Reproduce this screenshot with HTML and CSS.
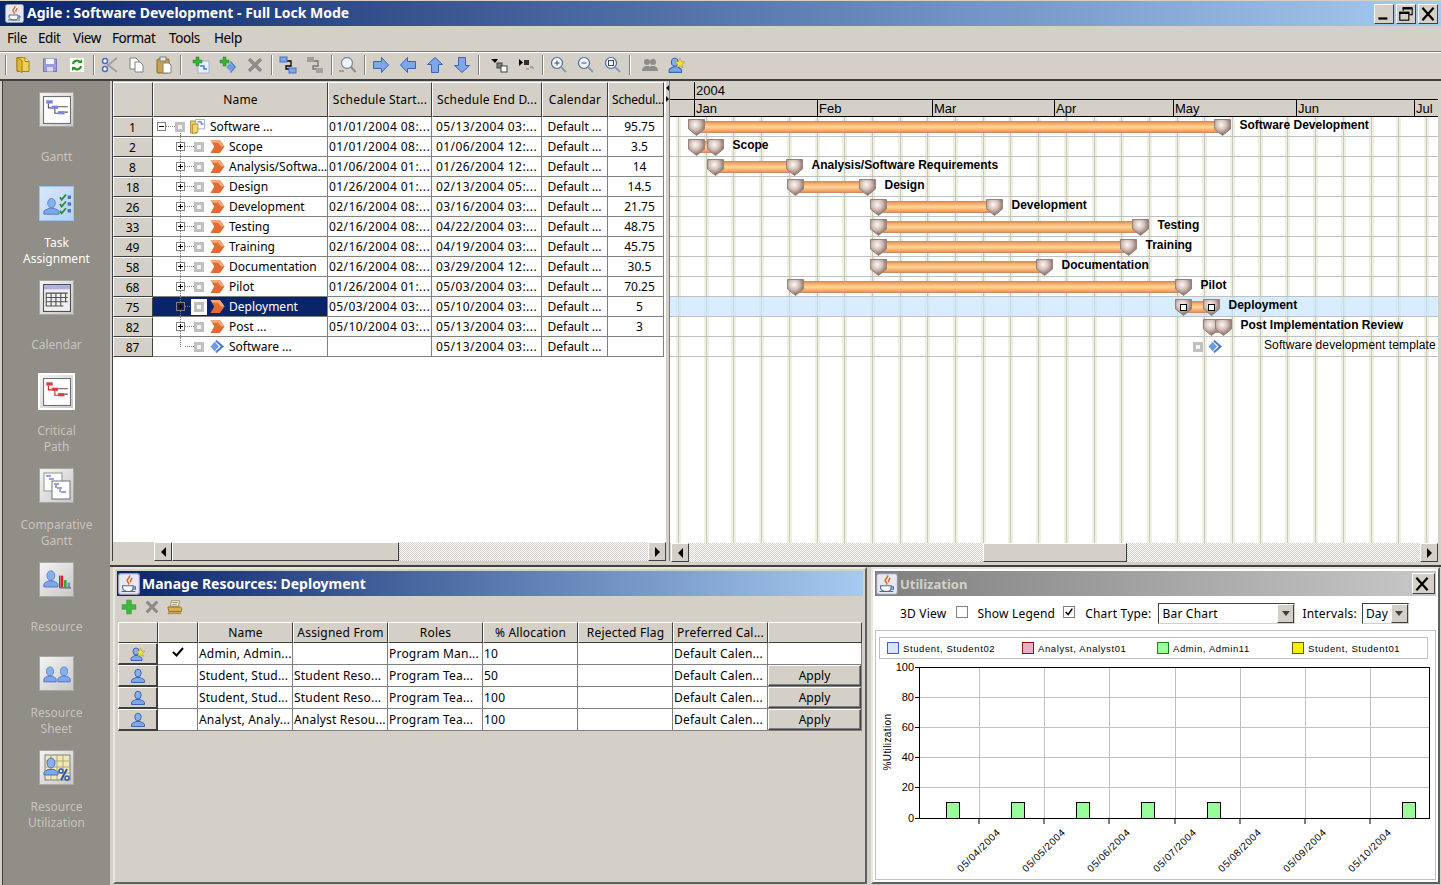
FILE: index.html
```html
<!DOCTYPE html>
<html lang="en">
  <head>
    <meta charset="UTF-8" />
    <title>Agile : Software Development - Full Lock Mode</title>
    <link rel="stylesheet" href="styles.css">
  </head>
  <body>
    <!-- icon sprite -->
    <svg class="sprite" xmlns="http://www.w3.org/2000/svg">
      <defs>
        <radialGradient id="shieldFill" cx="42%" cy="32%" r="62%">
          <stop offset="0" stop-color="#fbf8f6" />
          <stop offset="0.5" stop-color="#d4c2ba" />
          <stop offset="1" stop-color="#8e726a" />
        </radialGradient>
      </defs>
      <symbol id="i-java" viewBox="0 0 19 19">
        <rect x="0.5" y="0.5" width="18" height="18" rx="2" fill="#e8e8f0" stroke="#9098b0" />
        <path d="M10 2c1 2-3 3-2 5s2 1 1 3M12 4c0 2-2 2-1 4" fill="none" stroke="#e06820" stroke-width="1.3" />
        <path d="M4 11h9v2c0 2-2 3-4 3s-5-1-5-3z" fill="#fff" stroke="#4a6a9a" />
        <path d="M13 12h2v2h-2M3 16h12" fill="none" stroke="#4a6a9a" />
      </symbol>
      <symbol id="i-exp-plus" viewBox="0 0 9 9">
        <rect x="0.5" y="0.5" width="8" height="8" fill="#fff" stroke="#808080" />
        <path d="M2 4.5h5M4.5 2v5" stroke="#000" />
      </symbol>
      <symbol id="i-exp-dark" viewBox="0 0 9 9">
        <rect x="0.5" y="0.5" width="8" height="8" fill="#0a246a" stroke="#808080" />
        <path d="M2 4.5h5M4.5 2v5" stroke="#000" />
      </symbol>
      <symbol id="i-exp-minus" viewBox="0 0 9 9">
        <rect x="0.5" y="0.5" width="8" height="8" fill="#fff" stroke="#808080" />
        <path d="M2 4.5h5" stroke="#000" />
      </symbol>
      <symbol id="i-node" viewBox="0 0 10 10">
        <rect width="10" height="10" fill="#c0c0c0" />
        <rect x="3" y="3" width="4" height="4" fill="#f4f4f4" />
      </symbol>
      <symbol id="i-folder" viewBox="0 0 16 16">
        <path d="M0.500 2h6l1 1v12h-7z" fill="#e8c860" stroke="#a08030" stroke-width="0.8" />
        <path d="M6 0.500h9.500v10H6z" fill="#fff" stroke="#7a9ad0" stroke-width="0.8" />
        <path d="M8 3h4v2.500h2.500" fill="none" stroke="#5a80c8" stroke-width="1.200" />
        <path d="M2.500 6l6-1v9l-6 1.500z" fill="#f4d868" stroke="#a08030" stroke-width="0.8" />
      </symbol>
      <symbol id="i-chevron" viewBox="0 0 16 15">
        <path d="M0.500 0.500h10l5 7-5 7h-10l4-7z" fill="#e06c34" />
        <path d="M0.500 0.500h10l5 7h-3.500l-3.500-4H2.500z" fill="#f2a878" />
      </symbol>
      <symbol id="i-diamond" viewBox="0 0 16 15">
        <path d="M0.500 7.500L5 2.500l4.500 5L5 12.500z" fill="#6e9ce4" />
        <path d="M7 0.500l8 7-8 7-1.500-1.500 6-5.500-6-5.500z" fill="#4a7ad0" />
      </symbol>
      <symbol id="i-shield" viewBox="0 0 17 17">
        <path d="M0.500 0.500h16v9.500l-8 6.500-8-6.500z" fill="url(#shieldFill)" stroke="#96827a" />
      </symbol>

      <!-- toolbar -->
      <symbol id="t-open" viewBox="0 0 18 18">
        <path d="M3 1.500h8l4 4v10H3z" fill="#f0d050" stroke="#a08020" />
        <path d="M3 1.500l5 3v12l-5-2z" fill="#e0b830" stroke="#a08020" />
        <path d="M11 1.500v4h4" fill="#fff4b0" stroke="#a08020" />
      </symbol>
      <symbol id="t-save" viewBox="0 0 18 18">
        <rect x="2.500" y="3" width="13" height="12.500" fill="#9a9ae0" stroke="#7878c0" />
        <rect x="5" y="3" width="8" height="5" fill="#f4f4ff" />
        <rect x="6" y="11" width="6" height="4.500" fill="#d8d8f8" />
      </symbol>
      <symbol id="t-refresh" viewBox="0 0 18 18">
        <rect x="2" y="2" width="14" height="14" fill="#fff" />
        <path d="M5 8a4 4 0 0 1 7-2M13 10a4 4 0 0 1-7 2" fill="none" stroke="#1a9a1a" stroke-width="2" />
        <path d="M10 7h4V3zM8 11H4v4z" fill="#1a9a1a" />
      </symbol>
      <symbol id="t-cut" viewBox="0 0 18 18">
        <path d="M6 10L16 2M6 8l10 8" stroke="#a0a0a0" stroke-width="2" fill="none" />
        <circle cx="4" cy="5" r="2.500" fill="#fff" stroke="#4a70c0" stroke-width="1.500" />
        <circle cx="4" cy="13" r="2.500" fill="#fff" stroke="#4a70c0" stroke-width="1.500" />
      </symbol>
      <symbol id="t-copy" viewBox="0 0 18 18">
        <path d="M2 2h6l3 3v8H2z" fill="#fff" stroke="#808080" />
        <path d="M7 6h5l3 3v7H7z" fill="#fff" stroke="#808080" />
      </symbol>
      <symbol id="t-paste" viewBox="0 0 18 18">
        <rect x="2" y="3" width="12" height="14" rx="1" fill="#c8a050" stroke="#8a6a20" />
        <rect x="5" y="1" width="6" height="4" fill="#e8e8e8" stroke="#808080" />
        <path d="M8 7h6l2 2v8H8z" fill="#fff" stroke="#808080" />
      </symbol>
      <symbol id="t-newtask" viewBox="0 0 18 18">
        <rect x="6" y="5" width="11" height="12" fill="#e8f0ff" stroke="#a0b0d0" />
        <path d="M8 10h4v3h3" fill="none" stroke="#4a7ad0" stroke-width="1.500" />
        <path d="M4 1h3v3h3v3H7v3H4V7H1V4h3z" fill="#38b038" stroke="#208020" stroke-width="0.500" />
      </symbol>
      <symbol id="t-newsub" viewBox="0 0 18 18">
        <path d="M7 11l4-4 4 4-4 4z" fill="#6e9ce4" />
        <path d="M12 5l5 6-5 6-1-1 4-5-4-5z" fill="#4a7ad0" />
        <path d="M4 1h3v3h3v3H7v3H4V7H1V4h3z" fill="#38b038" stroke="#208020" stroke-width="0.500" />
      </symbol>
      <symbol id="t-x" viewBox="0 0 18 18">
        <path d="M3 3l12 12M15 3L3 15" stroke="#8c8c8c" stroke-width="3.500" />
      </symbol>
      <symbol id="t-link" viewBox="0 0 18 18">
        <path d="M6 5h6v5H7v3h4" fill="none" stroke="#000" stroke-width="1.300" />
        <rect x="1" y="1" width="7" height="5" fill="#7ea6e8" stroke="#4a70c0" />
        <rect x="10" y="12" width="7" height="5" fill="#7ea6e8" stroke="#4a70c0" />
      </symbol>
      <symbol id="t-unlink" viewBox="0 0 18 18">
        <path d="M6 5h6v5H7v3h4" fill="none" stroke="#707070" stroke-width="1.300" />
        <rect x="1" y="1" width="7" height="5" fill="#a0a0a0" />
        <rect x="10" y="12" width="7" height="5" fill="#a0a0a0" />
      </symbol>
      <symbol id="t-find" viewBox="0 0 18 18">
        <circle cx="8" cy="7" r="5.500" fill="#f0f4ff" stroke="#7a8aa8" stroke-width="1.300" />
        <path d="M12 11l4.500 5" stroke="#8a8a8a" stroke-width="2" />
        <path d="M1 15h3M1 14v2M4 14v2" stroke="#808080" fill="none" />
      </symbol>
      <symbol id="t-arrow" viewBox="0 0 18 18">
        <path d="M1.500 5.500h8v-4l7 7.500-7 7.500v-4h-8z" fill="#7ea6e8" stroke="#3a66b8" />
      </symbol>
      <symbol id="t-outdent" viewBox="0 0 18 18">
        <path d="M1 3h7l-3 4z" fill="#000" />
        <rect x="7" y="7" width="5" height="5" fill="#808080" stroke="#404040" />
        <rect x="11" y="10" width="6" height="6" fill="#fff" stroke="#404040" />
      </symbol>
      <symbol id="t-indent" viewBox="0 0 18 18">
        <path d="M2 3l4 3.500L2 10z" fill="#000" />
        <rect x="7" y="4" width="5" height="5" fill="#303030" />
        <path d="M13 11h3v2M9 13h3" stroke="#808080" fill="none" />
      </symbol>
      <symbol id="t-zoomin" viewBox="0 0 18 18">
        <circle cx="7" cy="7" r="5.500" fill="#f0f4ff" stroke="#4a6a9a" stroke-width="1.200" />
        <path d="M11 11l5 5" stroke="#9098a8" stroke-width="2" />
        <path d="M4.500 7h5M7 4.500v5" stroke="#404860" />
      </symbol>
      <symbol id="t-zoomout" viewBox="0 0 18 18">
        <circle cx="7" cy="7" r="5.500" fill="#f0f4ff" stroke="#4a6a9a" stroke-width="1.200" />
        <path d="M11 11l5 5" stroke="#9098a8" stroke-width="2" />
        <path d="M4.500 7h5" stroke="#404860" />
      </symbol>
      <symbol id="t-zoomfit" viewBox="0 0 18 18">
        <circle cx="7" cy="7" r="5.500" fill="#f0f4ff" stroke="#4a6a9a" stroke-width="1.200" />
        <path d="M11 11l5 5" stroke="#9098a8" stroke-width="2" />
        <rect x="4.500" y="4.500" width="5" height="5" fill="none" stroke="#404860" />
      </symbol>
      <symbol id="t-people" viewBox="0 0 18 18">
        <circle cx="6" cy="6" r="3" fill="#8c8c8c" />
        <circle cx="12" cy="6" r="3" fill="#8c8c8c" />
        <path d="M1 15c0-4 3-5 5-5s3 .5 3 1c0-.5 1-1 3-1s5 1 5 5z" fill="#8c8c8c" />
      </symbol>
      <symbol id="i-person" viewBox="0 0 16 16">
        <ellipse cx="8" cy="5" rx="3.200" ry="3.800" fill="#8ab0ec" stroke="#3a66b8" />
        <path d="M1.500 14.500v-2c0-1.500 3-2 4.500-3h4c1.500 1 4.500 1.500 4.500 3v2z" fill="#7ea6e8" stroke="#3a66b8" />
      </symbol>
      <symbol id="i-person-star" viewBox="0 0 16 16">
        <ellipse cx="6" cy="5.500" rx="3" ry="3.500" fill="#8ab0ec" stroke="#3a66b8" />
        <path d="M1 14.500v-2c0-1.500 2.500-2 4-3h3c1.500 1 4 1.500 4 3v2z" fill="#7ea6e8" stroke="#3a66b8" />
        <path d="M10.500 2l1.300 3 3.200.2-2.500 2.100.8 3.200-2.800-1.700-2.800 1.700.8-3.200L6 5.200l3.200-.2z" fill="#f4e040" stroke="#a09020" stroke-width="0.500" />
      </symbol>
      <symbol id="i-plus" viewBox="0 0 14 14">
        <path d="M5 1h4v4h4v4H9v4H5V9H1V5h4z" fill="#40b840" stroke="#289028" stroke-width="0.500" />
      </symbol>
      <symbol id="i-printer" viewBox="0 0 18 18">
        <path d="M5 2h9l-1 6H4z" fill="#fff" stroke="#a08030" />
        <path d="M1 9h14l2 2-1 3H2z" fill="#d8b050" stroke="#8a6a20" />
        <path d="M1 15h15v2H1z" fill="#b89030" />
        <path d="M6 4h6M6 6h5" stroke="#808080" />
      </symbol>

      <!-- side bar -->
      <symbol id="s-gantt" viewBox="0 0 26 26">
        <rect x="0.500" y="0.500" width="25" height="25" fill="#fff" stroke="#707070" />
        <rect x="3" y="4" width="6" height="3" fill="#7a84d8" />
        <rect x="8" y="9" width="6" height="3" fill="#7a84d8" />
        <rect x="14" y="14" width="6" height="3" fill="#7a84d8" />
        <path d="M5 7v4h3M11 12v4h3M14 10h9M20 15h3" fill="none" stroke="#505050" />
      </symbol>
      <symbol id="s-crit" viewBox="0 0 26 26">
        <rect x="0.500" y="0.500" width="25" height="25" fill="#fff" stroke="#707070" />
        <rect x="3" y="4" width="6" height="3" fill="#d84040" />
        <rect x="8" y="9" width="6" height="3" fill="#d84040" />
        <rect x="14" y="14" width="6" height="3" fill="#d84040" />
        <path d="M5 7v4h3M11 12v4h3" fill="none" stroke="#d82020" />
        <path d="M14 10h9M20 15h3" fill="none" stroke="#505050" />
      </symbol>
      <symbol id="s-task" viewBox="0 0 33 28">
        <ellipse cx="10" cy="13" rx="4.500" ry="5.500" fill="#8ab0ec" stroke="#5a80c8" />
        <path d="M1 26v-3c0-2 5-3 6-4h6c1 1 6 2 6 4v3z" fill="#7ea6e8" stroke="#4a70c0" />
        <path d="M20 6l2 3 5-6M20 14l2 3 5-6M20 22l2 3 5-6" fill="none" stroke="#2a8a30" stroke-width="2" />
        <rect x="29" y="4" width="4" height="4" fill="#4a70c8" />
        <rect x="29" y="12" width="4" height="4" fill="#4a70c8" />
        <rect x="29" y="20" width="4" height="4" fill="#4a70c8" />
      </symbol>
      <symbol id="s-cal" viewBox="0 0 26 26">
        <rect x="0.500" y="0.500" width="25" height="25" fill="#f0f0f0" stroke="#505050" />
        <rect x="1" y="1" width="24" height="4" fill="#b0b0e0" />
        <path d="M3 8.500h20M3 12.500h20M3 16.500h20M3 20.500h16M3 8v13M7.500 8v13M12 8v13M16.500 8v13M21 8v9" fill="none" stroke="#505050" />
      </symbol>
      <symbol id="s-comp" viewBox="0 0 28 28">
        <rect x="1" y="1" width="18" height="18" fill="#fff" stroke="#909090" />
        <path d="M3 4h5M6 7h5M9 10h5" stroke="#7a84d8" stroke-width="1.500" />
        <rect x="9" y="9" width="18" height="18" fill="#fff" stroke="#707070" />
        <path d="M11 12h5M14 16h5M18 20h5" stroke="#7a84d8" stroke-width="1.500" />
        <path d="M13 13v3M17 17v3" stroke="#505050" />
      </symbol>
      <symbol id="s-res" viewBox="0 0 32 28">
        <ellipse cx="9" cy="9" rx="4.500" ry="5.500" fill="#8ab0ec" stroke="#5a80c8" />
        <path d="M1 22v-3c0-2 4-3 5-4h6c1 1 5 2 5 4v3z" fill="#7ea6e8" stroke="#4a70c0" />
        <path d="M19 9v14h13" fill="none" stroke="#303030" />
        <rect x="20" y="9" width="3" height="13" fill="#d82020" />
        <rect x="24" y="14" width="3" height="8" fill="#38a838" />
        <rect x="28" y="17" width="3" height="5" fill="#6a90d8" />
      </symbol>
      <symbol id="s-sheet" viewBox="0 0 32 28">
        <ellipse cx="8" cy="11" rx="4" ry="5" fill="#8ab0ec" stroke="#5a80c8" />
        <path d="M1 23v-3c0-2 3-2.500 4-3.500h6c1 1 4 1.500 4 3.500v3z" fill="#7ea6e8" stroke="#4a70c0" />
        <ellipse cx="24" cy="11" rx="4" ry="5" fill="#8ab0ec" stroke="#5a80c8" />
        <path d="M17 23v-3c0-2 3-2.500 4-3.500h6c1 1 4 1.500 4 3.500v3z" fill="#7ea6e8" stroke="#4a70c0" />
      </symbol>
      <symbol id="s-util" viewBox="0 0 28 28">
        <rect x="2" y="1" width="25" height="25" fill="#f0e8b8" stroke="#808080" />
        <path d="M2 7h25M2 13h25M2 19h25M8 1v25M14 1v25M20 1v25" stroke="#b0a878" fill="none" />
        <ellipse cx="8" cy="9" rx="4" ry="5" fill="#8ab0ec" stroke="#4a70c0" />
        <path d="M1 21v-2c0-2 3-2.500 4-3.500h6c1 1 4 1.500 4 3.500v2z" fill="#7ea6e8" stroke="#4a70c0" />
        <path d="M24 15l-6 11" stroke="#2a5ab0" stroke-width="2" />
        <circle cx="18" cy="17" r="2" fill="none" stroke="#2a5ab0" stroke-width="1.500" />
        <circle cx="24" cy="24" r="2" fill="none" stroke="#2a5ab0" stroke-width="1.500" />
      </symbol>
    </svg>

    <div class="app">
      <!-- title bar -->
      <div class="titlebar">
        <svg class="title-icon"><use href="#i-java" /></svg>
        <span class="title-text">Agile : Software Development - Full Lock Mode</span>
        <div class="win-buttons">
          <button class="win-btn">
            <svg viewBox="0 0 16 16"><path d="M3 12h8" stroke="#000" stroke-width="2" /></svg>
          </button>
          <button class="win-btn">
            <svg viewBox="0 0 16 16"><path d="M5.500 5V2.500h8v6H11" fill="none" stroke="#000" /><path d="M5 3h8" stroke="#000" stroke-width="2" /><rect x="2.500" y="6.500" width="8" height="7" fill="none" stroke="#000" /><path d="M2 7h9" stroke="#000" stroke-width="2" /></svg>
          </button>
          <button class="win-btn">
            <svg viewBox="0 0 16 16"><path d="M3 2.500l10 11M13 2.500l-10 11" stroke="#000" stroke-width="2" /></svg>
          </button>
        </div>
      </div>

      <!-- menu -->
      <div class="menubar">
        <span class="menu-item menu-file">File</span>
        <span class="menu-item menu-edit">Edit</span>
        <span class="menu-item menu-view">View</span>
        <span class="menu-item menu-format">Format</span>
        <span class="menu-item menu-tools">Tools</span>
        <span class="menu-item">Help</span>
      </div>

      <!-- toolbar -->
      <div class="toolbar">
        <span class="tool-sep grip"></span>
        <span class="tool"><svg><use href="#t-open" /></svg></span>
        <span class="tool"><svg><use href="#t-save" /></svg></span>
        <span class="tool"><svg><use href="#t-refresh" /></svg></span>
        <span class="tool-sep"></span>
        <span class="tool"><svg><use href="#t-cut" /></svg></span>
        <span class="tool"><svg><use href="#t-copy" /></svg></span>
        <span class="tool"><svg><use href="#t-paste" /></svg></span>
        <span class="tool-sep wide"></span>
        <span class="tool"><svg><use href="#t-newtask" /></svg></span>
        <span class="tool"><svg><use href="#t-newsub" /></svg></span>
        <span class="tool"><svg><use href="#t-x" /></svg></span>
        <span class="tool-sep"></span>
        <span class="tool"><svg><use href="#t-link" /></svg></span>
        <span class="tool"><svg><use href="#t-unlink" /></svg></span>
        <span class="tool-sep"></span>
        <span class="tool"><svg><use href="#t-find" /></svg></span>
        <span class="tool-sep"></span>
        <span class="tool"><svg><use href="#t-arrow" /></svg></span>
        <span class="tool"><svg class="rot-left"><use href="#t-arrow" /></svg></span>
        <span class="tool"><svg class="rot-up"><use href="#t-arrow" /></svg></span>
        <span class="tool"><svg class="rot-down"><use href="#t-arrow" /></svg></span>
        <span class="tool-sep wide"></span>
        <span class="tool"><svg><use href="#t-outdent" /></svg></span>
        <span class="tool"><svg><use href="#t-indent" /></svg></span>
        <span class="tool-sep"></span>
        <span class="tool"><svg><use href="#t-zoomin" /></svg></span>
        <span class="tool"><svg><use href="#t-zoomout" /></svg></span>
        <span class="tool"><svg><use href="#t-zoomfit" /></svg></span>
        <span class="tool-sep wide"></span>
        <span class="tool"><svg><use href="#t-people" /></svg></span>
        <span class="tool"><svg><use href="#i-person-star" /></svg></span>
      </div>

      <div class="main">
        <!-- side bar -->
        <nav class="sidebar">
          <div class="side-item">
            <span class="side-btn"><svg class="side-ic"><use href="#s-gantt" /></svg></span>
            <span class="side-label">Gantt</span>
          </div>
          <div class="side-item active">
            <span class="side-btn"><svg class="side-ic"><use href="#s-task" /></svg></span>
            <span class="side-label">Task<br />Assignment</span>
          </div>
          <div class="side-item">
            <span class="side-btn"><svg class="side-ic"><use href="#s-cal" /></svg></span>
            <span class="side-label">Calendar</span>
          </div>
          <div class="side-item current">
            <span class="side-btn"><svg class="side-ic"><use href="#s-crit" /></svg></span>
            <span class="side-label">Critical<br />Path</span>
          </div>
          <div class="side-item">
            <span class="side-btn"><svg class="side-ic"><use href="#s-comp" /></svg></span>
            <span class="side-label">Comparative<br />Gantt</span>
          </div>
          <div class="side-item">
            <span class="side-btn"><svg class="side-ic"><use href="#s-res" /></svg></span>
            <span class="side-label">Resource</span>
          </div>
          <div class="side-item">
            <span class="side-btn"><svg class="side-ic"><use href="#s-sheet" /></svg></span>
            <span class="side-label">Resource<br />Sheet</span>
          </div>
          <div class="side-item">
            <span class="side-btn"><svg class="side-ic"><use href="#s-util" /></svg></span>
            <span class="side-label">Resource<br />Utilization</span>
          </div>
        </nav>

        <div class="work">
          <div class="split">
            <!-- task table -->
            <section class="task-pane">
              <div class="task-scroll">
                <table class="grid task-table">
                  <colgroup>
                    <col class="c-num" /><col class="c-name" /><col class="c-start" /><col class="c-end" /><col class="c-cal" /><col class="c-sched" />
                  </colgroup>
                  <thead>
                    <tr>
                      <th></th>
                      <th>Name</th>
                      <th>Schedule Start...</th>
                      <th>Schedule End D...</th>
                      <th>Calendar</th>
                      <th class="sched-head">Schedul...</th>
                    </tr>
                  </thead>
                  <tbody>
                    <tr>
                      <th>1</th>
                      <td class="name top"><svg class="exp"><use href="#i-exp-minus" /></svg><i class="dots"></i><svg class="node"><use href="#i-node" /></svg><svg class="kind top-kind"><use href="#i-folder" /></svg>Software ...</td>
                      <td>01/01/2004 08:...</td><td>05/13/2004 03:...</td><td>Default ...</td><td>95.75</td>
                    </tr>
                    <tr>
                      <th>2</th>
                      <td class="name"><svg class="exp"><use href="#i-exp-plus" /></svg><i class="dots"></i><svg class="node"><use href="#i-node" /></svg><svg class="kind"><use href="#i-chevron" /></svg>Scope</td>
                      <td>01/01/2004 08:...</td><td>01/06/2004 12:...</td><td>Default ...</td><td>3.5</td>
                    </tr>
                    <tr>
                      <th>8</th>
                      <td class="name"><svg class="exp"><use href="#i-exp-plus" /></svg><i class="dots"></i><svg class="node"><use href="#i-node" /></svg><svg class="kind"><use href="#i-chevron" /></svg>Analysis/Softwa...</td>
                      <td>01/06/2004 01:...</td><td>01/26/2004 12:...</td><td>Default ...</td><td>14</td>
                    </tr>
                    <tr>
                      <th>18</th>
                      <td class="name"><svg class="exp"><use href="#i-exp-plus" /></svg><i class="dots"></i><svg class="node"><use href="#i-node" /></svg><svg class="kind"><use href="#i-chevron" /></svg>Design</td>
                      <td>01/26/2004 01:...</td><td>02/13/2004 05:...</td><td>Default ...</td><td>14.5</td>
                    </tr>
                    <tr>
                      <th>26</th>
                      <td class="name"><svg class="exp"><use href="#i-exp-plus" /></svg><i class="dots"></i><svg class="node"><use href="#i-node" /></svg><svg class="kind"><use href="#i-chevron" /></svg>Development</td>
                      <td>02/16/2004 08:...</td><td>03/16/2004 03:...</td><td>Default ...</td><td>21.75</td>
                    </tr>
                    <tr>
                      <th>33</th>
                      <td class="name"><svg class="exp"><use href="#i-exp-plus" /></svg><i class="dots"></i><svg class="node"><use href="#i-node" /></svg><svg class="kind"><use href="#i-chevron" /></svg>Testing</td>
                      <td>02/16/2004 08:...</td><td>04/22/2004 03:...</td><td>Default ...</td><td>48.75</td>
                    </tr>
                    <tr>
                      <th>49</th>
                      <td class="name"><svg class="exp"><use href="#i-exp-plus" /></svg><i class="dots"></i><svg class="node"><use href="#i-node" /></svg><svg class="kind"><use href="#i-chevron" /></svg>Training</td>
                      <td>02/16/2004 08:...</td><td>04/19/2004 03:...</td><td>Default ...</td><td>45.75</td>
                    </tr>
                    <tr>
                      <th>58</th>
                      <td class="name"><svg class="exp"><use href="#i-exp-plus" /></svg><i class="dots"></i><svg class="node"><use href="#i-node" /></svg><svg class="kind"><use href="#i-chevron" /></svg>Documentation</td>
                      <td>02/16/2004 08:...</td><td>03/29/2004 12:...</td><td>Default ...</td><td>30.5</td>
                    </tr>
                    <tr>
                      <th>68</th>
                      <td class="name"><svg class="exp"><use href="#i-exp-plus" /></svg><i class="dots"></i><svg class="node"><use href="#i-node" /></svg><svg class="kind"><use href="#i-chevron" /></svg>Pilot</td>
                      <td>01/26/2004 01:...</td><td>05/03/2004 03:...</td><td>Default ...</td><td>70.25</td>
                    </tr>
                    <tr>
                      <th>75</th>
                      <td class="name selected"><svg class="exp"><use href="#i-exp-dark" /></svg><i class="dots"></i><svg class="node"><use href="#i-node" /></svg><svg class="kind"><use href="#i-chevron" /></svg>Deployment</td>
                      <td>05/03/2004 03:...</td><td>05/10/2004 03:...</td><td>Default ...</td><td>5</td>
                    </tr>
                    <tr>
                      <th>82</th>
                      <td class="name"><svg class="exp"><use href="#i-exp-plus" /></svg><i class="dots"></i><svg class="node"><use href="#i-node" /></svg><svg class="kind"><use href="#i-chevron" /></svg>Post ...</td>
                      <td>05/10/2004 03:...</td><td>05/13/2004 03:...</td><td>Default ...</td><td>3</td>
                    </tr>
                    <tr>
                      <th>87</th>
                      <td class="name last"><span class="exp-gap"></span><i class="dots"></i><svg class="node"><use href="#i-node" /></svg><svg class="kind"><use href="#i-diamond" /></svg>Software ...</td>
                      <td></td><td>05/13/2004 03:...</td><td>Default ...</td><td></td>
                    </tr>
                  </tbody>
                </table>
              </div>
              <div class="scrollbar">
                <span class="sb-blank"></span>
                <span class="sb-btn left"></span>
                <span class="sb-thumb task-thumb"></span>
                <span class="sb-track"></span>
                <span class="sb-btn right"></span>
              </div>
            </section>

            <div class="splitter"></div>

            <!-- gantt chart -->
            <section class="gantt-pane">
              <div class="gantt-head">
                <div class="head-row year-row">
                  <span></span><span>2004</span>
                </div>
                <div class="head-row month-row">
                  <span></span><span>Jan</span><span>Feb</span><span>Mar</span><span>Apr</span><span>May</span><span>Jun</span><span>Jul</span>
                </div>
              </div>
              <div class="gantt-body">
                <div class="g-row">
                  <div class="task" style="left:19px;width:543px"><i class="bar"></i><svg class="shield s-l"><use href="#i-shield" /></svg><svg class="shield s-r"><use href="#i-shield" /></svg><span class="g-label">Software Development</span></div>
                </div>
                <div class="g-row">
                  <div class="task" style="left:19px;width:36px"><i class="bar"></i><svg class="shield s-l"><use href="#i-shield" /></svg><svg class="shield s-r"><use href="#i-shield" /></svg><span class="g-label">Scope</span></div>
                </div>
                <div class="g-row">
                  <div class="task" style="left:38px;width:96px"><i class="bar"></i><svg class="shield s-l"><use href="#i-shield" /></svg><svg class="shield s-r"><use href="#i-shield" /></svg><span class="g-label">Analysis/Software Requirements</span></div>
                </div>
                <div class="g-row">
                  <div class="task" style="left:118px;width:89px"><i class="bar"></i><svg class="shield s-l"><use href="#i-shield" /></svg><svg class="shield s-r"><use href="#i-shield" /></svg><span class="g-label">Design</span></div>
                </div>
                <div class="g-row">
                  <div class="task" style="left:201px;width:133px"><i class="bar"></i><svg class="shield s-l"><use href="#i-shield" /></svg><svg class="shield s-r"><use href="#i-shield" /></svg><span class="g-label">Development</span></div>
                </div>
                <div class="g-row">
                  <div class="task" style="left:201px;width:279px"><i class="bar"></i><svg class="shield s-l"><use href="#i-shield" /></svg><svg class="shield s-r"><use href="#i-shield" /></svg><span class="g-label">Testing</span></div>
                </div>
                <div class="g-row">
                  <div class="task" style="left:201px;width:267px"><i class="bar"></i><svg class="shield s-l"><use href="#i-shield" /></svg><svg class="shield s-r"><use href="#i-shield" /></svg><span class="g-label">Training</span></div>
                </div>
                <div class="g-row">
                  <div class="task" style="left:201px;width:183px"><i class="bar"></i><svg class="shield s-l"><use href="#i-shield" /></svg><svg class="shield s-r"><use href="#i-shield" /></svg><span class="g-label">Documentation</span></div>
                </div>
                <div class="g-row">
                  <div class="task" style="left:118px;width:405px"><i class="bar"></i><svg class="shield s-l"><use href="#i-shield" /></svg><svg class="shield s-r"><use href="#i-shield" /></svg><span class="g-label">Pilot</span></div>
                </div>
                <div class="g-row current-row">
                  <div class="task" style="left:506px;width:45px"><i class="bar"></i><svg class="shield s-l"><use href="#i-shield" /></svg><svg class="shield s-r"><use href="#i-shield" /></svg><i class="handle h-l"></i><i class="handle h-r"></i><span class="g-label">Deployment</span></div>
                </div>
                <div class="g-row">
                  <div class="task" style="left:534px;width:29px"><i class="bar"></i><svg class="shield s-l"><use href="#i-shield" /></svg><svg class="shield s-r"><use href="#i-shield" /></svg><span class="g-label">Post Implementation Review</span></div>
                </div>
                <div class="g-row">
                  <svg class="g-mark g-node" style="left:523px"><use href="#i-node" /></svg>
                  <svg class="g-mark g-diamond" style="left:538px"><use href="#i-diamond" /></svg>
                  <span class="g-plain" style="left:594px">Software development template</span>
                </div>
              </div>
              <div class="scrollbar gantt-sb">
                <span class="sb-btn left"></span>
                <span class="sb-track gantt-track"></span>
                <span class="sb-thumb gantt-thumb"></span>
                <span class="sb-track"></span>
                <span class="sb-btn right"></span>
              </div>
            </section>
          </div>

          <div class="panels">
            <!-- manage resources -->
            <section class="frame res-frame">
              <div class="frame-title active-title">
                <svg class="frame-icon"><use href="#i-java" /></svg>
                <span>Manage Resources: Deployment</span>
              </div>
              <div class="res-tools">
                <svg class="res-tool"><use href="#i-plus" /></svg>
                <svg class="res-tool"><use href="#t-x" /></svg>
                <svg class="res-tool"><use href="#i-printer" /></svg>
              </div>
              <table class="grid res-table">
                <colgroup>
                  <col class="r-num" /><col class="r-check" /><col class="r-col" /><col class="r-col" /><col class="r-col" /><col class="r-col" /><col class="r-col" /><col class="r-col" /><col class="r-last" />
                </colgroup>
                <thead>
                  <tr>
                    <th></th><th></th><th>Name</th><th>Assigned From</th><th>Roles</th><th>% Allocation</th><th>Rejected Flag</th><th>Preferred Cal...</th><th></th>
                  </tr>
                </thead>
                <tbody>
                  <tr>
                    <th><svg class="row-ic"><use href="#i-person-star" /></svg></th>
                    <td class="check"><svg viewBox="0 0 12 10" class="tick"><path d="M1 5l3.500 3.500L11 1" fill="none" stroke="#000" stroke-width="2" /></svg></td>
                    <td>Admin, Admin...</td><td></td><td>Program Man...</td><td>10</td><td></td><td>Default Calen...</td><td></td>
                  </tr>
                  <tr>
                    <th><svg class="row-ic"><use href="#i-person" /></svg></th>
                    <td></td>
                    <td>Student, Stud...</td><td>Student Reso...</td><td>Program Tea...</td><td>50</td><td></td><td>Default Calen...</td><td class="apply-cell"><button class="apply">Apply</button></td>
                  </tr>
                  <tr>
                    <th><svg class="row-ic"><use href="#i-person" /></svg></th>
                    <td></td>
                    <td>Student, Stud...</td><td>Student Reso...</td><td>Program Tea...</td><td>100</td><td></td><td>Default Calen...</td><td class="apply-cell"><button class="apply">Apply</button></td>
                  </tr>
                  <tr>
                    <th><svg class="row-ic"><use href="#i-person" /></svg></th>
                    <td></td>
                    <td>Analyst, Analy...</td><td>Analyst Resou...</td><td>Program Tea...</td><td>100</td><td></td><td>Default Calen...</td><td class="apply-cell"><button class="apply">Apply</button></td>
                  </tr>
                </tbody>
              </table>
            </section>

            <!-- utilization -->
            <section class="frame util-frame">
              <div class="frame-title idle-title">
                <svg class="frame-icon"><use href="#i-java" /></svg>
                <span>Utilization</span>
                <button class="win-btn frame-close">
                  <svg viewBox="0 0 16 16"><path d="M3 2.500l10 11M13 2.500l-10 11" stroke="#000" stroke-width="2" /></svg>
                </button>
              </div>
              <div class="util-controls">
                <span>3D View</span>
                <span class="checkbox check-3d"></span>
                <span>Show Legend</span>
                <span class="checkbox check-legend"><svg viewBox="0 0 12 12"><path d="M2 6l3 3 5-7" fill="none" stroke="#000" stroke-width="1.800" /></svg></span>
                <span>Chart Type:</span>
                <span class="combo chart-combo">Bar Chart<i class="combo-btn"></i></span>
                <span>Intervals:</span>
                <span class="combo interval-combo">Day<i class="combo-btn"></i></span>
              </div>
              <div class="chart-box">
                <div class="legend">
                  <span class="legend-item"><i class="swatch sw-blue"></i>Student, Student02</span>
                  <span class="legend-item"><i class="swatch sw-pink"></i>Analyst, Analyst01</span>
                  <span class="legend-item"><i class="swatch sw-green"></i>Admin, Admin11</span>
                  <span class="legend-item"><i class="swatch sw-yellow"></i>Student, Student01</span>
                </div>
                <svg class="chart" viewBox="876 661 561 218" xmlns="http://www.w3.org/2000/svg">
                  <g class="grid-lines">
                    <path d="M979 667V818M1044 667V818M1109 667V818M1175 667V818M1240 667V818M1305 667V818M1370 667V818" />
                    <path d="M919 697.500H1430M919 727.500H1430M919 757.500H1430M919 787.500H1430" />
                  </g>
                  <rect x="919.500" y="667.500" width="510" height="151" fill="none" stroke="#000" />
                  <path d="M915 667.500h4M915 697.500h4M915 727.500h4M915 757.500h4M915 787.500h4M915 818.500h4M979 818v6M1044 818v6M1109 818v6M1175 818v6M1240 818v6M1305 818v6M1370 818v6" stroke="#000" />
                  <g class="bars">
                    <rect x="946.500" y="802.500" width="13" height="16" />
                    <rect x="1011.500" y="802.500" width="13" height="16" />
                    <rect x="1076.500" y="802.500" width="13" height="16" />
                    <rect x="1141.500" y="802.500" width="13" height="16" />
                    <rect x="1207.500" y="802.500" width="13" height="16" />
                    <rect x="1402.500" y="802.500" width="13" height="16" />
                  </g>
                  <g class="y-labels">
                    <text x="914" y="671">100</text>
                    <text x="914" y="701">80</text>
                    <text x="914" y="731">60</text>
                    <text x="914" y="761">40</text>
                    <text x="914" y="791">20</text>
                    <text x="914" y="822">0</text>
                  </g>
                  <text class="y-title" transform="translate(891 742) rotate(-90)">%Utilization</text>
                  <g class="x-labels">
                    <text transform="translate(1001 833) rotate(-45)">05/04/2004</text>
                    <text transform="translate(1066 833) rotate(-45)">05/05/2004</text>
                    <text transform="translate(1131 833) rotate(-45)">05/06/2004</text>
                    <text transform="translate(1197 833) rotate(-45)">05/07/2004</text>
                    <text transform="translate(1262 833) rotate(-45)">05/08/2004</text>
                    <text transform="translate(1327 833) rotate(-45)">05/09/2004</text>
                    <text transform="translate(1392 833) rotate(-45)">05/10/2004</text>
                  </g>
                </svg>
              </div>
            </section>
          </div>
        </div>
      </div>
    </div>
  </body>
</html>
```

FILE: styles.css
```css
* {
  box-sizing: border-box;
}
body {
  margin: 0;
  width: 1441px;
  height: 885px;
  overflow: hidden;
  background-color: #d4d0c8;
  font-family: "Noto Sans", Tahoma, sans-serif;
  font-size: 12px;
  color: #000;
}
button {
  font-family: inherit;
  font-size: inherit;
  padding: 0;
}
.sprite {
  display: block;
  width: 0;
  height: 0;
  overflow: hidden;
}
.app {
  display: flex;
  flex-direction: column;
  height: 885px;
}

/* title bar */
.titlebar {
  display: flex;
  align-items: center;
  flex: none;
  height: 25px;
  margin-top: 1px;
  padding-left: 5px;
  background: linear-gradient(90deg, #0a246a, #a6caf0);
  color: #fff;
  font-size: 14px;
  font-weight: bold;
}
.title-icon {
  width: 19px;
  height: 19px;
  margin-right: 3px;
}
.title-text {
  margin-bottom: 2px;
}
.win-buttons {
  display: flex;
  gap: 2px;
  margin-left: auto;
  margin-right: 3px;
}
.win-btn {
  display: block;
  width: 20px;
  height: 20px;
  background-color: #d4d0c8;
  border: 1px solid;
  border-color: #fff #404040 #404040 #fff;
}
.win-btn svg {
  display: block;
  width: 18px;
  height: 18px;
}

/* menu */
.menubar {
  display: flex;
  align-items: center;
  flex: none;
  height: 26px;
  padding-left: 7px;
  padding-bottom: 2px;
  border-bottom: 1px solid #808080;
  font-size: 13.500px;
  letter-spacing: -0.400px;
}
.menu-file {
  width: 31px;
}
.menu-edit {
  width: 35px;
}
.menu-view {
  width: 39px;
}
.menu-format {
  width: 57px;
}
.menu-tools {
  width: 45px;
}

/* toolbar */
.toolbar {
  display: flex;
  align-items: center;
  flex: none;
  height: 27px;
  padding-left: 3px;
  padding-bottom: 2px;
  border-top: 1px solid #fff;
}
.tool {
  display: flex;
  align-items: center;
  justify-content: center;
  width: 27px;
  height: 24px;
}
.tool svg {
  width: 18px;
  height: 18px;
}
.rot-left {
  transform: rotate(180deg);
}
.rot-up {
  transform: rotate(-90deg);
}
.rot-down {
  transform: rotate(90deg);
}
.tool-sep {
  flex: none;
  width: 6px;
  height: 20px;
  background: linear-gradient(90deg, transparent 2px, #808080 2px 3px, #fff 3px 4px, transparent 4px);
}
.tool-sep.wide {
  width: 10px;
}
.tool-sep.grip {
  width: 6.500px;
}

.main {
  display: flex;
  flex: 1;
  min-height: 0;
  border-top: 2px solid #404040;
}

/* side bar */
.sidebar {
  display: flex;
  flex-direction: column;
  flex: none;
  width: 108px;
  margin-left: 2px;
  padding-top: 11px;
  background-color: #918d87;
  border-left: 1px solid #404040;
  color: #c8c4bc;
}
.side-item {
  display: flex;
  flex-direction: column;
  align-items: center;
  flex: none;
  height: 94px;
}
.side-btn {
  display: flex;
  align-items: center;
  justify-content: center;
  width: 35px;
  height: 35px;
  background: linear-gradient(135deg, #f4f4f4, #c8c8c8);
  border: 1px solid #aaa6a0;
}
.side-ic {
  width: 28px;
  height: 28px;
}
.side-label {
  display: flex;
  align-items: center;
  justify-content: center;
  height: 32px;
  margin-top: 14px;
  line-height: 16px;
  text-align: center;
}
.side-item.active {
  color: #fff;
}
.side-item.active .side-btn {
  background: linear-gradient(135deg, #d8e8fc, #b8d0f4);
  border-color: #a0c0ec;
}
.side-item.current .side-btn {
  border: 2px solid #fff;
  height: 37px;
  width: 37px;
  margin-top: -1px;
  margin-bottom: -1px;
}

.work {
  display: flex;
  flex-direction: column;
  flex: 1;
  min-width: 0;
}
.split {
  display: flex;
  flex: none;
  height: 486px;
  padding-bottom: 4px;
  border-bottom: 2px solid #404040;
}

/* shared grid */
.grid {
  border-collapse: separate;
  border-spacing: 0;
  table-layout: fixed;
  background-color: #fff;
}
.grid th {
  padding: 0;
  overflow: hidden;
  background-color: #d4d0c8;
  border: 1px solid;
  border-color: #fff #404040 #404040 #fff;
  font-weight: normal;
  text-align: center;
  white-space: nowrap;
}
.grid thead th {
  letter-spacing: 0.200px;
}
.grid td {
  padding: 0;
  overflow: hidden;
  border-right: 1px solid #808080;
  border-bottom: 1px solid #808080;
  white-space: nowrap;
}

/* task table */
.task-pane {
  display: flex;
  flex-direction: column;
  flex: none;
  width: 554px;
  margin-left: 2px;
  border-left: 1px solid #404040;
}
.task-scroll {
  height: 461px;
  margin-top: 1px;
  background-color: #fff;
}
.task-table {
  width: 551px;
}
.c-num {
  width: 40px;
}
.c-name {
  width: 175px;
}
.c-start {
  width: 104px;
}
.c-end {
  width: 110px;
}
.c-cal {
  width: 66px;
}
.c-sched {
  width: 56px;
}
.task-table thead th {
  height: 35px;
}
.task-table thead th.sched-head {
  padding-left: 3px;
  letter-spacing: -0.200px;
  text-align: left;
}
.task-table tbody th,
.task-table tbody td {
  height: 20px;
}
.task-table tbody th {
  padding-right: 1px;
}
.task-table tbody td {
  text-align: center;
}
.task-table tbody td:nth-child(3),
.task-table tbody td:nth-child(4) {
  letter-spacing: 0.450px;
}
.task-table tbody td:nth-child(6) {
  padding-left: 8px;
}
.task-table td.name {
  position: relative;
  padding-top: 2px;
  padding-left: 23px;
  line-height: 15px;
  text-align: left;
  vertical-align: top;
}
.task-table td.name::before {
  content: "";
  position: absolute;
  left: 27px;
  top: 0;
  bottom: 0;
  border-left: 1px dotted #808080;
}
.task-table td.name.top {
  padding-left: 4px;
}
.task-table td.name.top::before {
  top: 14px;
}
.task-table td.name.last::before {
  bottom: 9px;
}
.exp,
.node,
.kind,
.exp-gap {
  display: inline-block;
  position: relative;
  top: -1px;
  vertical-align: middle;
}
.exp,
.exp-gap {
  width: 9px;
  height: 9px;
}
.dots {
  display: inline-block;
  position: relative;
  top: -1px;
  width: 9px;
  height: 1px;
  vertical-align: middle;
  border-top: 1px dotted #808080;
}
.node {
  width: 10px;
  height: 10px;
}
.kind {
  width: 15px;
  height: 15px;
  margin-left: 6px;
  margin-right: 4px;
}
.top-kind {
  margin-left: 5px;
  margin-right: 5px;
}
.name.selected {
  background-color: #0a246a;
  color: #fff;
}
.name.selected .node {
  outline: 3px solid #fff;
  outline-offset: 0;
}

/* scroll bars */
.scrollbar {
  display: flex;
  flex: none;
  height: 19px;
}
.sb-blank {
  width: 41px;
}
.sb-btn,
.sb-thumb {
  flex: none;
  background-color: #d4d0c8;
  border: 1px solid;
  border-color: #fff #404040 #404040 #fff;
}
.sb-btn {
  display: flex;
  align-items: center;
  justify-content: center;
  width: 18px;
}
.sb-btn::before {
  content: "";
  border-style: solid;
  border-color: transparent #000;
}
.sb-btn.left::before {
  border-width: 5px 5px 5px 0;
}
.sb-btn.right::before {
  border-width: 5px 0 5px 5px;
}
.sb-track {
  flex: 1;
  background: repeating-conic-gradient(#d4d0c8 0 25%, #fff 0 50%) 0 0 / 2px 2px;
}
.task-thumb {
  width: 227px;
}
.gantt-sb {
  margin-left: 1px;
}
.gantt-track {
  flex: none;
  width: 294px;
}
.gantt-thumb {
  width: 144px;
}

.splitter {
  position: relative;
  flex: none;
  width: 5px;
  margin-left: -1px;
  border-right: 1px solid #808080;
}
.splitter::before,
.splitter::after {
  content: "";
  position: absolute;
  left: 1px;
  border-style: solid;
  border-color: transparent #000;
}
.splitter::before {
  top: 4px;
  border-width: 3px 3px 3px 0;
}
.splitter::after {
  top: 15px;
  border-width: 3px 0 3px 3px;
}

/* gantt chart */
.gantt-pane {
  display: flex;
  flex-direction: column;
  flex: none;
  width: 768px;
}
.gantt-head {
  flex: none;
  height: 35px;
  margin-top: 1px;
  font-family: "Liberation Sans", Arial, sans-serif;
  font-size: 13px;
}
.head-row {
  display: grid;
  border-bottom: 1px solid #000;
}
.head-row span {
  padding-left: 1px;
  line-height: 18px;
  overflow: hidden;
  border-right: 1px solid #000;
}
.head-row span:last-child {
  border-right: none;
}
.year-row {
  grid-template-columns: 25px 1fr;
  height: 18px;
}
.month-row {
  grid-template-columns: 25px 123px 115px 122px 119px 123px 118px 1fr;
  height: 17px;
}
.month-row span {
  line-height: 17px;
}
.gantt-body {
  flex: none;
  height: 426px;
  font-family: "Liberation Sans", Arial, sans-serif;
  background-color: #fff;
  background-image: repeating-linear-gradient(90deg, transparent 0 6px, #f0f0e0 6px 8px, #c8c8c4 8px 9px, #f0f0e0 9px 11px, transparent 11px 27.700px);
}
.g-row {
  position: relative;
  height: 20px;
  border-bottom: 1px solid #c0c0c0;
}
.current-row {
  background-color: rgba(200, 230, 255, 0.7);
}
.task {
  position: absolute;
  top: 0;
  height: 19px;
  margin-left: -1px;
}
.bar {
  position: absolute;
  left: 8px;
  right: 8px;
  top: 4px;
  height: 12px;
  background: linear-gradient(180deg, #c08868, #f4a464 18%, #ffd898 50%, #f4a464 82%, #c08868);
}
.shield {
  position: absolute;
  top: 2px;
  width: 17px;
  height: 17px;
}
.s-l {
  left: 0;
}
.s-r {
  right: 0;
}
.handle {
  position: absolute;
  top: 7px;
  width: 7px;
  height: 7px;
  background-color: #fff;
  border: 1px solid #000;
}
.h-l {
  left: 5px;
}
.h-r {
  right: 5px;
}
.g-label {
  position: absolute;
  left: 100%;
  top: 0;
  margin-left: 8.500px;
  font-size: 12px;
  font-weight: bold;
  line-height: 16px;
  white-space: nowrap;
}
.g-mark {
  position: absolute;
}
.g-node {
  top: 5px;
  width: 10px;
  height: 10px;
}
.g-diamond {
  top: 2px;
  width: 15px;
  height: 15px;
}
.g-plain {
  position: absolute;
  top: 0;
  font-size: 12px;
  letter-spacing: 0.100px;
  line-height: 16px;
  white-space: nowrap;
}

/* bottom panels */
.panels {
  display: flex;
  flex: 1;
  min-height: 0;
  padding-left: 3px;
  gap: 4px;
}
.frame {
  display: flex;
  flex-direction: column;
  padding: 2px;
  margin-bottom: 1px;
  border: 2px solid;
  border-color: #e8e6e0 #606060 #606060 #e8e6e0;
}
.res-frame {
  flex: none;
  width: 754px;
}
.util-frame {
  flex: none;
  width: 569px;
  background-color: #fff;
}
.frame-title {
  display: flex;
  align-items: center;
  flex: none;
  height: 25px;
  padding-left: 1px;
  font-size: 14px;
  font-weight: bold;
}
.frame-icon {
  width: 22px;
  height: 22px;
  margin-right: 2px;
}
.active-title {
  background: linear-gradient(90deg, #0a246a, #a6caf0);
  color: #fff;
}
.idle-title {
  background: linear-gradient(90deg, #808080, #c8c8c8);
  color: #d4d0c8;
  font-size: 13px;
}
.frame-close {
  margin-left: auto;
  margin-right: 1px;
  width: 23px;
  height: 21px;
}

/* manage resources */
.res-tools {
  display: flex;
  align-items: flex-start;
  flex: none;
  gap: 7px;
  height: 26px;
  padding-top: 3px;
  padding-left: 4px;
}
.res-tool {
  width: 16px;
  height: 16px;
}
.res-table {
  width: 744px;
  margin-left: 1px;
}
.r-num,
.r-check {
  width: 40px;
}
.r-col {
  width: 95px;
}
.r-last {
  width: 94px;
}
.res-table thead th {
  height: 21px;
}
.res-table tbody th,
.res-table tbody td {
  height: 22px;
}
.res-table tbody td {
  padding-left: 1px;
  letter-spacing: 0.200px;
}
.res-table tbody th {
  border-bottom-width: 2px;
  border-right-width: 2px;
}
.row-ic {
  display: block;
  width: 16px;
  height: 16px;
  margin: 0 auto;
}
.res-table td.check {
  text-align: center;
}
.tick {
  display: inline-block;
  width: 12px;
  height: 10px;
  margin-bottom: 1px;
}
.res-table td.apply-cell {
  padding: 0;
}
.apply {
  display: block;
  width: 100%;
  height: 21px;
  background-color: #d4d0c8;
  border: 1px solid;
  border-color: #fff #404040 #404040 #fff;
  box-shadow: inset -1px -1px #808080;
}

/* utilization */
.util-controls {
  display: flex;
  align-items: center;
  flex: none;
  height: 34px;
  padding-left: 25px;
  letter-spacing: 0.200px;
}
.checkbox {
  display: block;
  flex: none;
  width: 12px;
  height: 12px;
  background-color: #fff;
  border: 1px solid #808080;
}
.checkbox svg {
  display: block;
  width: 10px;
  height: 10px;
}
.check-3d {
  margin: 0 9px 2px 10px;
}
.check-legend {
  margin: 0 10px 2px 8px;
}
.combo {
  display: flex;
  align-items: center;
  flex: none;
  height: 21px;
  padding-left: 3px;
  background-color: #fff;
  border: 1px solid;
  border-color: #404040 #d4d0c8 #d4d0c8 #404040;
}
.chart-combo {
  width: 137px;
  margin: 0 7px;
}
.interval-combo {
  width: 47px;
  margin-left: 5px;
}
.combo-btn {
  display: flex;
  align-items: center;
  justify-content: center;
  width: 17px;
  height: 19px;
  margin-left: auto;
  background-color: #d4d0c8;
  border: 1px solid;
  border-color: #fff #404040 #404040 #fff;
}
.combo-btn::before {
  content: "";
  border-style: solid;
  border-color: #404040 transparent;
  border-width: 5px 4px 0;
}
.chart-box {
  flex: 1;
  min-height: 0;
  padding: 6px 0 0 3px;
  border: 1px solid #c0c0c0;
}
.legend {
  display: flex;
  align-items: center;
  width: 549px;
  height: 22px;
  padding-left: 7px;
  border: 1px solid #c0c0c0;
  font-family: "Liberation Sans", Arial, sans-serif;
  font-size: 9.500px;
  letter-spacing: 0.600px;
}
.legend-item {
  display: flex;
  align-items: center;
  flex: none;
  width: 135px;
}
.swatch {
  width: 12px;
  height: 12px;
  margin-right: 4px;
  border: 1px solid;
}
.sw-blue {
  background-color: #d8e4f8;
  border-color: #4060d0;
}
.sw-pink {
  background-color: #e8b0c4;
  border-color: #901010;
}
.sw-green {
  background-color: #98ff98;
  border-color: #208020;
}
.sw-yellow {
  background-color: #f0f000;
  border-color: #606000;
}
.chart {
  display: block;
  width: 561px;
  height: 218px;
  margin-top: 2px;
  margin-left: -3px;
  font-family: "Liberation Sans", Arial, sans-serif;
}
.grid-lines path {
  stroke: #c0c0c0;
  fill: none;
  shape-rendering: crispEdges;
}
.bars rect {
  fill: #98ff98;
  stroke: #000;
}
.y-labels text {
  font-size: 11px;
  text-anchor: end;
}
.y-title {
  font-size: 10px;
  letter-spacing: 0.400px;
  text-anchor: middle;
}
.x-labels text {
  font-size: 10px;
  text-anchor: end;
  letter-spacing: 0.600px;
}
```
